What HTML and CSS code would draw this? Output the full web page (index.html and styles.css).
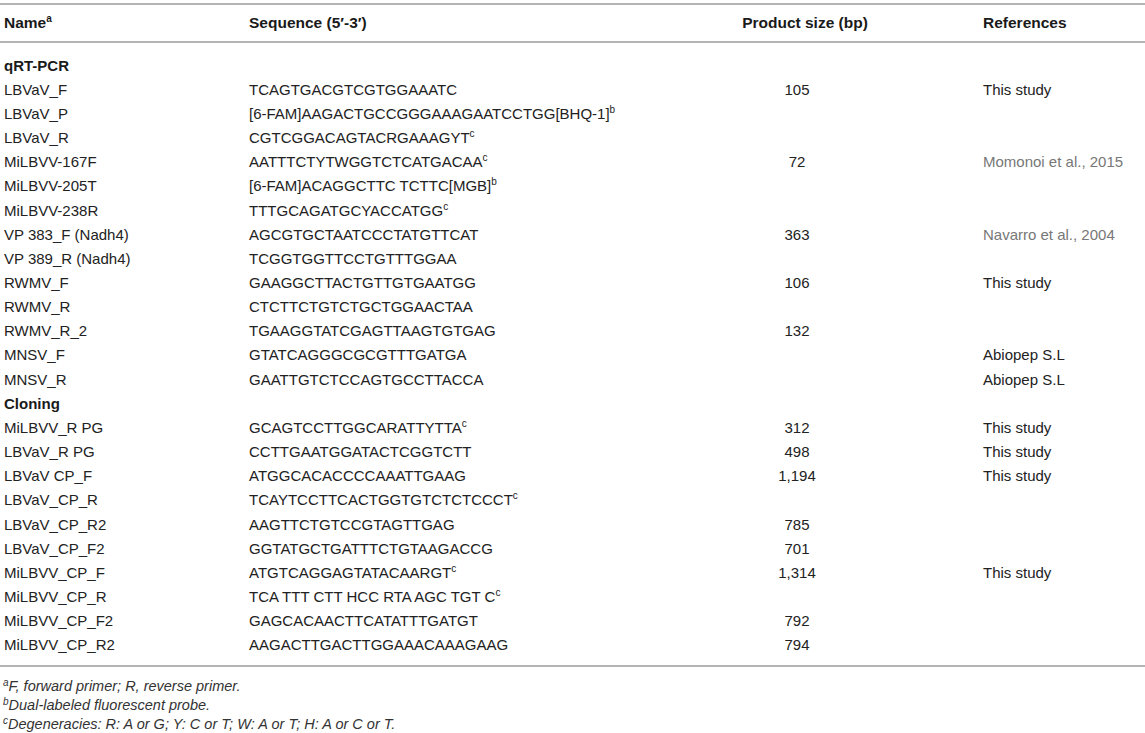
FILE: index.html
```html
<!DOCTYPE html>
<html>
<head>
<meta charset="utf-8">
<link rel="stylesheet" href="styles.css">
</head>
<body>
<table class="primers">
  <colgroup>
    <col class="c-name"><col class="c-seq"><col class="c-size"><col class="c-ref">
  </colgroup>
  <thead>
    <tr>
      <th class="name">Name<sup>a</sup></th>
      <th>Sequence (5′-3′)</th>
      <th class="size">Product size (bp)</th>
      <th class="ref">References</th>
    </tr>
  </thead>
  <tbody>
    <tr class="first"><td class="name section" colspan="4">qRT-PCR</td></tr>
    <tr><td class="name">LBVaV_F</td><td>TCAGTGACGTCGTGGAAATC</td><td class="size">105</td><td class="ref">This study</td></tr>
    <tr><td class="name">LBVaV_P</td><td>[6-FAM]AAGACTGCCGGGAAAGAATCCTGG[BHQ-1]<sup>b</sup></td><td class="size"></td><td class="ref"></td></tr>
    <tr><td class="name">LBVaV_R</td><td>CGTCGGACAGTACRGAAAGYT<sup>c</sup></td><td class="size"></td><td class="ref"></td></tr>
    <tr><td class="name">MiLBVV-167F</td><td>AATTTCTYTWGGTCTCATGACAA<sup>c</sup></td><td class="size">72</td><td class="ref link">Momonoi et al., 2015</td></tr>
    <tr><td class="name">MiLBVV-205T</td><td>[6-FAM]ACAGGCTTC TCTTC[MGB]<sup>b</sup></td><td class="size"></td><td class="ref"></td></tr>
    <tr><td class="name">MiLBVV-238R</td><td>TTTGCAGATGCYACCATGG<sup>c</sup></td><td class="size"></td><td class="ref"></td></tr>
    <tr><td class="name">VP 383_F (Nadh4)</td><td>AGCGTGCTAATCCCTATGTTCAT</td><td class="size">363</td><td class="ref link">Navarro et al., 2004</td></tr>
    <tr><td class="name">VP 389_R (Nadh4)</td><td>TCGGTGGTTCCTGTTTGGAA</td><td class="size"></td><td class="ref"></td></tr>
    <tr><td class="name">RWMV_F</td><td>GAAGGCTTACTGTTGTGAATGG</td><td class="size">106</td><td class="ref">This study</td></tr>
    <tr><td class="name">RWMV_R</td><td>CTCTTCTGTCTGCTGGAACTAA</td><td class="size"></td><td class="ref"></td></tr>
    <tr><td class="name">RWMV_R_2</td><td>TGAAGGTATCGAGTTAAGTGTGAG</td><td class="size">132</td><td class="ref"></td></tr>
    <tr><td class="name">MNSV_F</td><td>GTATCAGGGCGCGTTTGATGA</td><td class="size"></td><td class="ref">Abiopep S.L</td></tr>
    <tr><td class="name">MNSV_R</td><td>GAATTGTCTCCAGTGCCTTACCA</td><td class="size"></td><td class="ref">Abiopep S.L</td></tr>
    <tr><td class="name section" colspan="4">Cloning</td></tr>
    <tr><td class="name">MiLBVV_R PG</td><td>GCAGTCCTTGGCARATTYTTA<sup>c</sup></td><td class="size">312</td><td class="ref">This study</td></tr>
    <tr><td class="name">LBVaV_R PG</td><td>CCTTGAATGGATACTCGGTCTT</td><td class="size">498</td><td class="ref">This study</td></tr>
    <tr><td class="name">LBVaV CP_F</td><td>ATGGCACACCCCAAATTGAAG</td><td class="size">1,194</td><td class="ref">This study</td></tr>
    <tr><td class="name">LBVaV_CP_R</td><td>TCAYTCCTTCACTGGTGTCTCTCCCT<sup>c</sup></td><td class="size"></td><td class="ref"></td></tr>
    <tr><td class="name">LBVaV_CP_R2</td><td>AAGTTCTGTCCGTAGTTGAG</td><td class="size">785</td><td class="ref"></td></tr>
    <tr><td class="name">LBVaV_CP_F2</td><td>GGTATGCTGATTTCTGTAAGACCG</td><td class="size">701</td><td class="ref"></td></tr>
    <tr><td class="name">MiLBVV_CP_F</td><td>ATGTCAGGAGTATACAARGT<sup>c</sup></td><td class="size">1,314</td><td class="ref">This study</td></tr>
    <tr><td class="name">MiLBVV_CP_R</td><td>TCA TTT CTT HCC RTA AGC TGT C<sup>c</sup></td><td class="size"></td><td class="ref"></td></tr>
    <tr><td class="name">MiLBVV_CP_F2</td><td>GAGCACAACTTCATATTTGATGT</td><td class="size">792</td><td class="ref"></td></tr>
    <tr class="last"><td class="name">MiLBVV_CP_R2</td><td>AAGACTTGACTTGGAAACAAAGAAG</td><td class="size">794</td><td class="ref"></td></tr>
  </tbody>
</table>
<div class="notes">
  <p><sup>a</sup>F, forward primer; R, reverse primer.</p>
  <p><sup>b</sup>Dual-labeled fluorescent probe.</p>
  <p><sup>c</sup>Degeneracies: R: A or G; Y: C or T; W: A or T; H: A or C or T.</p>
</div>
</body>
</html>
```

FILE: styles.css
```css
html, body {
  margin: 0;
  padding: 0;
  background: #fff;
}
body {
  font-family: "Liberation Sans", Arial, sans-serif;
  color: #222;
  font-size: 15px;
}
.primers {
  width: 1145px;
  border-collapse: collapse;
  margin-top: 3px;
  border-top: 2px solid #b4b4b4;
  border-bottom: 2px solid #b4b4b4;
}
.c-name { width: 249px; }
.c-seq { width: 468px; }
.c-size { width: 160px; }
.c-ref { width: auto; }
.primers th {
  font-weight: bold;
  font-size: 15.5px;
  text-align: left;
  height: 36px;
  padding: 0;
  border-bottom: 2px solid #b4b4b4;
  color: #1a1a1a;
}
.primers td {
  padding: 0;
  height: 24.17px;
  line-height: 17px;
  vertical-align: middle;
  white-space: nowrap;
}
.primers .name { padding-left: 4px; }
.primers .size { text-align: center; }
.primers .ref { padding-left: 106px; }
.primers th.size { padding-left: 16px; }
.primers tr.first td { padding-top: 10px; }
.primers tr.last td { padding-bottom: 8px; }
.primers td.section { font-weight: bold; color: #1a1a1a; }
.primers td.link { color: #777; }
sup {
  font-size: 10px;
  line-height: 0;
  vertical-align: 6px;
}
.notes {
  padding: 10px 0 0 3px;
  font-style: italic;
  font-size: 14.5px;
  color: #333;
}
.notes p {
  margin: 0;
  height: 19px;
  line-height: 19px;
}
.notes sup {
  font-size: 10px;
  vertical-align: 5px;
}
```
